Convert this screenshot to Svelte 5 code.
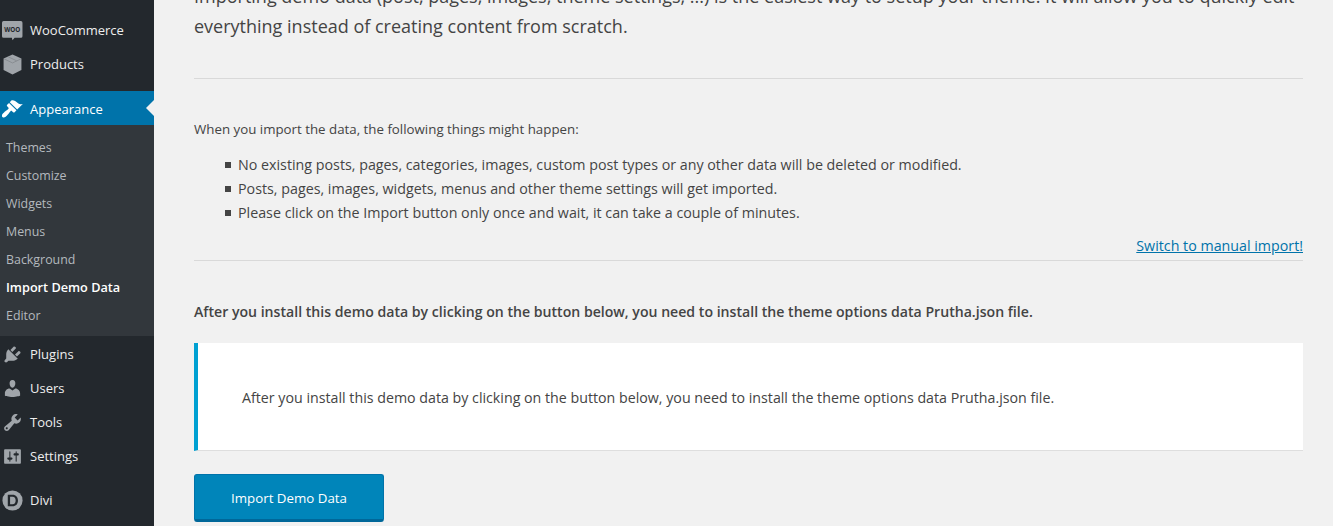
<script>
  const top = [
    { label: 'WooCommerce', icon: 'woo' },
    { label: 'Products', icon: 'box' }
  ];
  const sub = ['Themes', 'Customize', 'Widgets', 'Menus', 'Background', 'Import Demo Data', 'Editor'];
  const bottom = [
    { label: 'Plugins', icon: 'plug' },
    { label: 'Users', icon: 'user' },
    { label: 'Tools', icon: 'wrench' },
    { label: 'Settings', icon: 'sliders' }
  ];
  const items = [
    'No existing posts, pages, categories, images, custom post types or any other data will be deleted or modified.',
    'Posts, pages, images, widgets, menus and other theme settings will get imported.',
    'Please click on the Import button only once and wait, it can take a couple of minutes.'
  ];
</script>

{#snippet icon(name)}
  <svg class="ico" viewBox="0 0 20 20" width="21" height="21" aria-hidden="true">
    {#if name === 'woo'}
      <path d="M1.500 1h16.500a1.500 1.500 0 0 1 1.500 1.500v13a1.500 1.500 0 0 1-1.500 1.500h-6l-2 2.300-.6-2.300H1.500A1.500 1.500 0 0 1 0 15.500v-13A1.500 1.500 0 0 1 1.500 1z" fill="#a0a5aa"/>
      <text x="9.750" y="11.300" text-anchor="middle" class="woo">WOO</text>
    {:else if name === 'box'}
      <path d="M10 .5l8.500 3.800v11L10 19.500l-8.500-4.200v-11z" fill="#a0a5aa"/>
      <path d="M2 4.700l8 3.800 8-3.800M6 2.700l8 3.800" fill="none" stroke="#84898e" stroke-width=".8"/>
    {:else if name === 'plug'}
      <path d="M13.110 4.360L9.870 7.600 8 5.730l3.240-3.240c.35-.34 1.050-.2 1.560.32.52.51.66 1.210.31 1.550zm-8 1.770l.91-1.120 9.010 9.010-1.190.84c-.71.71-2.630 1.160-3.820 1.160H6.140L4.900 17.260c-.59.59-1.540.59-2.120 0-.59-.58-.59-1.530 0-2.120l1.240-1.240v-3.880c0-1.130.4-3.190 1.090-3.890zm7.260 3.970l3.240-3.240c.34-.35 1.040-.21 1.550.31.52.51.66 1.210.31 1.550l-3.240 3.250z" fill="#a0a5aa"/>
    {:else if name === 'user'}
      <path d="M10 9.250c-2.270 0-2.730-3.440-2.730-3.440C7 4.020 7.820 2 9.970 2c2.160 0 2.980 2.020 2.710 3.810 0 0-.41 3.440-2.680 3.440zm0 2.570L12.720 10c2.390 0 4.520 2.330 4.520 4.530v2.490s-3.650 1.130-7.240 1.130c-3.650 0-7.240-1.130-7.240-1.130v-2.490c0-2.250 1.940-4.480 4.470-4.480z" fill="#a0a5aa"/>
    {:else if name === 'wrench'}
      <path fill-rule="evenodd" d="M16.680 9.770c-1.340 1.340-3.300 1.670-4.950.99l-5.410 6.520c-.99.99-2.590.99-3.580 0s-.99-2.590 0-3.570l6.520-5.420c-.68-1.650-.35-3.610.99-4.950 1.280-1.280 3.120-1.620 4.720-1.060l-2.890 2.890 2.820 2.820 2.860-2.870c.53 1.580.18 3.390-1.080 4.650zM3.810 16.210c.4.390 1.040.39 1.430 0 .4-.4.4-1.040 0-1.430-.39-.4-1.030-.4-1.430 0-.39.390-.39 1.030 0 1.430z" fill="#a0a5aa"/>
    {:else if name === 'sliders'}
      <path fill-rule="evenodd" d="M18 16V4c0-.55-.45-1-1-1H3c-.55 0-1 .45-1 1v12c0 .55.45 1 1 1h14c.55 0 1-.45 1-1zM8 11h1c.55 0 1 .45 1 1s-.45 1-1 1H8v1.500c0 .28-.22.5-.5.5s-.5-.22-.5-.5V13H6c-.55 0-1-.45-1-1s.45-1 1-1h1V5.500c0-.28.22-.5.5-.5s.5.22.5.5V11zm5-2h-1c-.55 0-1-.45-1-1s.45-1 1-1h1V5.500c0-.28.22-.5.5-.5s.5.22.5.5V7h1c.55 0 1 .45 1 1s-.45 1-1 1h-1v5.500c0 .28-.22.5-.5.5s-.5-.22-.5-.5V9z" fill="#a0a5aa"/>
    {/if}
  </svg>
{/snippet}

<div class="page">
  <aside class="side">
    <ul class="menu first">
      {#each top as m}
        <li class="row">{@render icon(m.icon)}<span>{m.label}</span></li>
      {/each}
    </ul>
    <div class="current">
      <svg class="ico" viewBox="0 0 20 20" width="21" height="21" aria-hidden="true">
        <path d="M14.480 11.060L7.410 3.990l1.500-1.500c.5-.56 2.300-.47 3.510.32 1.210.8 1.430 1.280 2.910 2.100 1.180.64 2.450 1.260 4.450.85zm-.71.71L6.700 4.700 4.930 6.470c-.39.39-.39 1.020 0 1.410l1.060 1.060c.39.39.39 1.030 0 1.420-.6.6-1.430 1.110-2.210 1.690-.35.26-.7.53-1.010.84-1.430 1.430-2.970 2.900-2.970 3.900 0 .5.2.9.6 1.300.4.4.8.6 1.300.6 1 0 2.500-1.500 3.900-2.970.31-.31.58-.66.84-1.010.58-.78 1.090-1.610 1.690-2.210.39-.39 1.030-.39 1.420 0l1.060 1.060c.39.39 1.020.39 1.410 0z" fill="#fff"/>
      </svg>
      <span class="curlabel">Appearance</span>
      <i class="arrow"></i>
    </div>
    <ul class="sub">
      {#each sub as s}
        <li class:on={s === 'Import Demo Data'}>{s}</li>
      {/each}
    </ul>
    <ul class="menu second">
      {#each bottom as m}
        <li class="row">{@render icon(m.icon)}<span>{m.label}</span></li>
      {/each}
    </ul>
    <div class="row divi">
      <svg class="ico" viewBox="0 0 20 20" width="21" height="21" aria-hidden="true">
        <circle cx="10" cy="10" r="9.600" fill="#a0a5aa"/>
        <path fill-rule="evenodd" d="M5.500 4.500h4.500c3.400 0 5.200 2.300 5.200 5.500s-1.800 5.500-5.200 5.500H5.500zm2.200 1.900v7.200H10c2 0 3-1.500 3-3.600s-1-3.600-3-3.600z" fill="#23282d"/>
      </svg>
      <span>Divi</span>
    </div>
  </aside>

  <main class="main">
    <p class="lead">Importing demo data (post, pages, images, theme settings, ...) is the easiest way to setup your theme. It will allow you to quickly edit everything instead of creating content from scratch.</p>
    <hr class="rule one" />
    <p class="intro">When you import the data, the following things might happen:</p>
    <ul class="list">
      {#each items as it}
        <li>{it}</li>
      {/each}
    </ul>
    <div class="switch"><a href="#manual">Switch to manual import!</a></div>
    <hr class="rule" />
    <p class="note">After you install this demo data by clicking on the button below, you need to install the theme options data Prutha.json file.</p>
    <div class="notice">After you install this demo data by clicking on the button below, you need to install the theme options data Prutha.json file.</div>
    <button class="go">Import Demo Data</button>
  </main>
</div>

<style>
  :global(body) { margin: 0; background: #f1f1f1; overflow: hidden; }
  .page {
    display: flex; height: 526px; overflow: hidden;
    font-family: "Open Sans", "Noto Sans", sans-serif; color: #444;
  }
  ul { list-style: none; margin: 0; padding: 0; }
  .side { width: 154px; flex: none; background: #23282d; color: #eee; font-size: 13px; }
  .first { padding-top: 13px; }
  .row { display: flex; align-items: center; height: 34px; padding-left: 2px; gap: 7px; }
  .ico { flex: none; display: block; }
  .woo { font: 700 6px "Open Sans", sans-serif; fill: #23282d; }
  .current {
    position: relative; display: flex; align-items: center; gap: 7px;
    height: 34px; margin-top: 10px; padding-left: 2px;
    background: #0073aa; color: #fff;
  }
  .curlabel { padding-top: 2px; }
  .arrow {
    position: absolute; right: 0; top: 9px; width: 0; height: 0;
    border: 8px solid transparent; border-right-color: #f1f1f1; border-left-width: 0;
  }
  .sub { background: #32373c; padding: 9px 0 6px; height: 196px; }
  .sub li { height: 28px; line-height: 28px; padding-left: 6px; color: #b4b9be; font-size: 12.400px; }
  .sub li.on { color: #fff; font-weight: 600; font-size: 12.700px; line-height: 26px; }
  .second { padding-top: 1px; }
  .divi { margin-top: 10px; }

  .main { flex: 1; min-width: 0; padding: 0 30px 0 40px; }
  .lead { margin: -19px 0 0; font-size: 18px; line-height: 30px; color: #444; }
  .rule { border: 0; border-top: 1px solid #d9d9d9; margin: 0; }
  .rule.one { margin-top: 37px; }
  .intro { margin: 41px 0 0; font-size: 13.300px; line-height: 18px; }
  .list { margin-top: 15px; padding-left: 44px; font-size: 14.270px; line-height: 24px; }
  .list li { position: relative; }
  .list li::before {
    content: ""; position: absolute; left: -13px; top: 9px; width: 6px; height: 6px; background: #444;
  }
  .switch { text-align: right; margin-top: 9px; height: 26px; line-height: 24px; font-size: 14.250px; }
  .switch a { color: #0073aa; }
  .note { margin: 40px 0 0; font-size: 14.120px; font-weight: 600; line-height: 22px; }
  .notice {
    margin-top: 20px; height: 108px; box-sizing: border-box; padding: 2px 0 0 44px;
    display: flex; align-items: center;
    background: #fff; border-left: 4px solid #00a0d2; border-bottom: 1px solid #dedede;
    font-size: 14.230px;
  }
  .go {
    display: block; margin-top: 23px; width: 190px; height: 48px; padding: 2px 0 0;
    background: #0085ba; border: 1px solid #0073aa; border-bottom: 3px solid #006799; border-radius: 3px;
    color: #fff; font: 13.300px "Open Sans", sans-serif;
  }
</style>
